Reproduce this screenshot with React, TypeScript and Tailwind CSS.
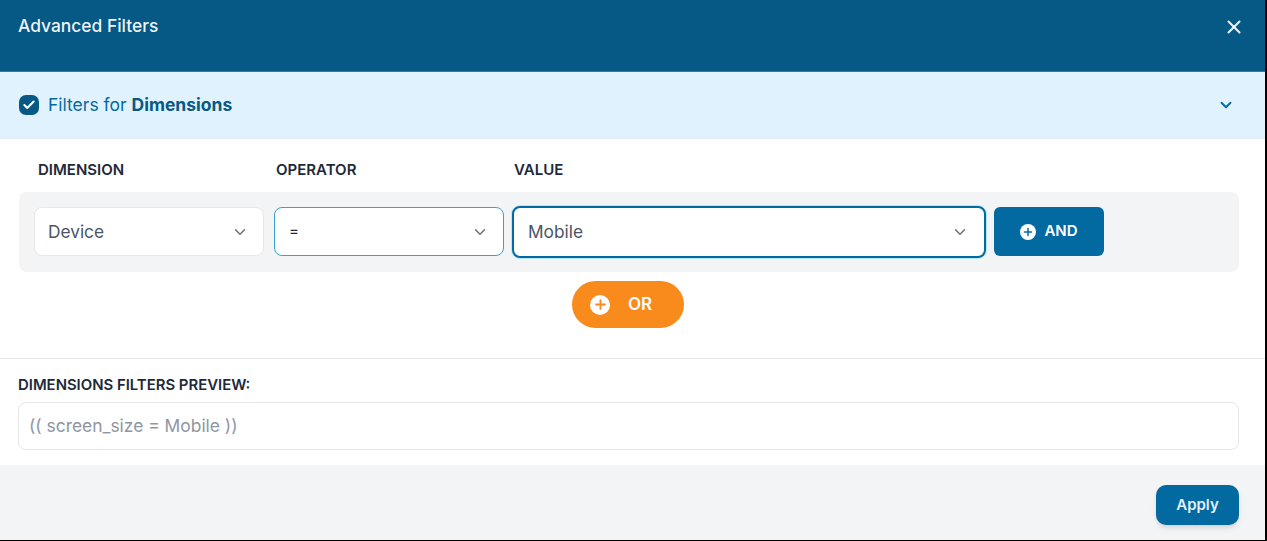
import React from 'react';
import { ChevronDown, X, Check, Plus } from 'lucide-react';

const SelectBox = ({ value, className, textClass }: { value: string; className: string; textClass?: string }) => (
  <div className={`flex items-center justify-between bg-white rounded-lg ${className}`}>
    <span className={textClass ?? 'text-[17.3px] text-gray-600'}>{value}</span>
    <ChevronDown className="w-[18px] h-[18px] text-gray-500" strokeWidth={2} />
  </div>
);

const PlusCircle = ({ size, color }: { size: string; color: string }) => (
  <span className={`flex items-center justify-center rounded-full bg-white ${size}`}>
    <Plus className={`w-3/4 h-3/4 ${color}`} strokeWidth={3} />
  </span>
);

export default function App() {
  return (
    <div className="w-[1267px] h-[541px] bg-black overflow-hidden font-['Inter',sans-serif]">
      <div className="w-[1265px] h-[540px] bg-white flex flex-col">
        {/* header */}
        <div className="h-[71px] bg-[#075985] flex items-start justify-between pl-[18px] pr-[20px] pt-[14px] shrink-0">
          <h1 className="text-[17.4px] font-medium text-white/95 leading-6">Advanced Filters</h1>
          <X className="w-[22px] h-[22px] mt-[2px] text-white/90" strokeWidth={2.25} />
        </div>

        {/* accordion title */}
        <div className="h-[68px] bg-[#e0f2fe] border-t border-[#38799f] border-b-2 border-b-[#e5edf3] flex items-center justify-between pl-[19px] pr-[30px] shrink-0">
          <div className="flex items-center gap-[9px]">
            <span className="w-5 h-5 rounded-[7px] bg-[#075985] flex items-center justify-center">
              <Check className="w-3.5 h-3.5 text-white" strokeWidth={3.5} />
            </span>
            <span className="pt-[2px] text-[17.5px] text-[#0369a1]">
              Filters for <b className="font-bold text-[#075985]">Dimensions</b>
            </span>
          </div>
          <ChevronDown className="w-[18px] h-[18px] text-[#0369a1]" strokeWidth={2.5} />
        </div>

        {/* filter rows */}
        <div className="h-[220px] pl-[19px] pr-[26px] border-b border-gray-200 shrink-0">
          <div className="flex pt-[21px] h-[53px] text-[15px] font-semibold text-gray-800 leading-5">
            <span className="w-[238px] pl-[19px]">DIMENSION</span>
            <span className="w-[238px] pl-[19px]">OPERATOR</span>
            <span className="pl-[19px]">VALUE</span>
          </div>
          <div className="h-[80px] pb-[1px] bg-gray-100 rounded-lg flex items-center pl-[15px]">
            <SelectBox value="Device" className="w-[230px] h-[49px] border border-gray-200 pl-[13px] pr-[14px]" />
            <SelectBox
              value="="
              textClass="text-[15px] text-gray-800"
              className="w-[230px] h-[49px] ml-[10px] border border-[#38a0d3] pl-[14px] pr-[14px]"
            />
            <SelectBox
              value="Mobile"
              className="w-[474px] h-[52px] ml-[8px] border-2 border-[#0369a1] ring-1 ring-sky-200 pl-[14px] pr-[15px]"
            />
            <button className="w-[110px] h-[49px] ml-[8px] bg-[#0369a1] rounded-md flex items-center justify-center gap-2 text-[15px] font-semibold text-white">
              <PlusCircle size="w-4 h-4" color="text-[#0369a1]" />
              AND
            </button>
          </div>
          <div className="flex justify-center pt-[9px]">
            <button className="w-[112px] h-[47px] -ml-[2px] bg-[#f98a1c] rounded-full flex items-center pl-[18px] gap-[18px] text-[17px] font-semibold text-white">
              <PlusCircle size="w-5 h-5" color="text-[#f98a1c]" />
              OR
            </button>
          </div>
        </div>

        {/* preview */}
        <div className="h-[106px] pl-[18px] pr-[26px] shrink-0">
          <p className="pt-[16px] h-[43px] text-[14.9px] font-semibold text-gray-800 leading-5">DIMENSIONS FILTERS PREVIEW:</p>
          <div className="h-[48px] pt-[1px] border border-gray-200 rounded-lg flex items-center pl-[10px] text-[17.4px] text-[#8f96a3]">
            (( screen_size = Mobile ))
          </div>
        </div>

        {/* footer */}
        <div className="flex-1 bg-gray-100 flex justify-end items-start pr-[26px] pt-[20px]">
          <button className="w-[83px] h-[40px] bg-[#0369a1] rounded-[10px] shadow-md text-[15px] font-semibold text-white/90">
            Apply
          </button>
        </div>
      </div>
    </div>
  );
}
